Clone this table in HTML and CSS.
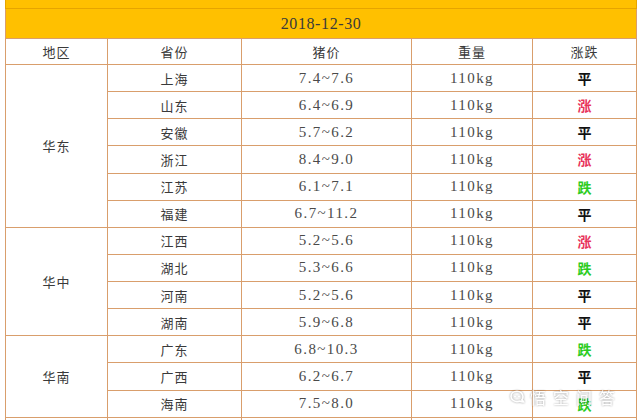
FILE: index.html
```html
<!DOCTYPE html>
<html lang="zh">
<head>
<meta charset="utf-8">
<link rel="stylesheet" href="styles.css">
</head>
<body>
<div class="page">
<table class="price">
<colgroup><col class="c1"><col class="c2"><col class="c3"><col class="c4"><col class="c5"></colgroup>
<tr class="strip"><td colspan="5"></td></tr>
<tr class="title"><td colspan="5">2018-12-30</td></tr>
<tr class="head"><td>地区</td><td>省份</td><td>猪价</td><td>重量</td><td>涨跌</td></tr>
<tr><td class="region" rowspan="6">华东</td><td class="prov">上海</td><td class="num">7.4~7.6</td><td class="num">110kg</td><td class="flat">平</td></tr>
<tr><td class="prov">山东</td><td class="num">6.4~6.9</td><td class="num">110kg</td><td class="up">涨</td></tr>
<tr><td class="prov">安徽</td><td class="num">5.7~6.2</td><td class="num">110kg</td><td class="flat">平</td></tr>
<tr><td class="prov">浙江</td><td class="num">8.4~9.0</td><td class="num">110kg</td><td class="up">涨</td></tr>
<tr><td class="prov">江苏</td><td class="num">6.1~7.1</td><td class="num">110kg</td><td class="down">跌</td></tr>
<tr><td class="prov">福建</td><td class="num">6.7~11.2</td><td class="num">110kg</td><td class="flat">平</td></tr>
<tr><td class="region" rowspan="4">华中</td><td class="prov">江西</td><td class="num">5.2~5.6</td><td class="num">110kg</td><td class="up">涨</td></tr>
<tr><td class="prov">湖北</td><td class="num">5.3~6.6</td><td class="num">110kg</td><td class="down">跌</td></tr>
<tr><td class="prov">河南</td><td class="num">5.2~5.6</td><td class="num">110kg</td><td class="flat">平</td></tr>
<tr><td class="prov">湖南</td><td class="num">5.9~6.8</td><td class="num">110kg</td><td class="flat">平</td></tr>
<tr><td class="region" rowspan="3">华南</td><td class="prov">广东</td><td class="num">6.8~10.3</td><td class="num">110kg</td><td class="down">跌</td></tr>
<tr><td class="prov">广西</td><td class="num">6.2~6.7</td><td class="num">110kg</td><td class="flat">平</td></tr>
<tr><td class="prov">海南</td><td class="num">7.5~8.0</td><td class="num">110kg</td><td class="down">跌</td></tr>
<tr class="tail"><td></td><td></td><td></td><td></td><td></td></tr>
</table>
<div class="watermark">
<svg class="wm-logo" viewBox="0 0 16 16" width="16" height="16" aria-hidden="true">
<path d="M8 2.2c3.4 0 6 2.4 6 5.6 0 1.3-.5 2.4-1.3 3.3.9.4 1.6 1 1.9 1.8-1.5.1-2.8-.2-3.8-.8-.9.4-1.8.5-2.8.5-3.4 0-6-2.4-6-5.4S4.6 2.2 8 2.2z" fill="none" stroke="#fff" stroke-width="1.6"/>
<circle cx="6" cy="7.6" r="1" fill="#fff"/><circle cx="10" cy="7.6" r="1" fill="#fff"/>
</svg>
<span class="wm-text">悟空问答</span>
</div>
</div>
</body>
</html>
```
FILE: styles.css
```css
html, body {
  margin: 0;
  padding: 0;
  background: #ffffff;
  height: 420px;
  overflow: hidden;
}
.page {
  position: relative;
  width: 640px;
  height: 420px;
  overflow: hidden;
  padding-left: 5px;
  box-sizing: border-box;
}
.price {
  border-collapse: collapse;
  table-layout: fixed;
  width: 631px;
  margin-top: -1px;
  font-family: "Noto Sans CJK SC", "Noto Sans", sans-serif;
  font-size: 13px;
  color: #3a3a3a;
}
.c1 { width: 102px; }
.c2 { width: 134px; }
.c3 { width: 170px; }
.c4 { width: 121px; }
.c5 { width: 104px; }
.price td {
  border: 1px solid #d99e6c;
  padding: 0;
  text-align: center;
  vertical-align: middle;
  line-height: 1;
  height: 26.13px;
}
.price tr.strip td {
  background: #ffc000;
  height: 8px;
  border-color: #e6a400;
}
.price tr.title td {
  background: #ffc000;
  height: 29px;
  font-family: "Liberation Serif", serif;
  font-size: 16px;
  letter-spacing: 0.6px;
  color: #3a3a3a;
  border-top-color: #e6a400;
}
.price tr.head td {
  height: 25px;
  letter-spacing: 1px;
}
.prov, .region {
  letter-spacing: 1px;
}
.num {
  font-family: "Liberation Serif", serif;
  font-size: 15px;
  letter-spacing: 1.4px;
  color: #4a4a4a;
}
.flat, .up, .down {
  font-family: "Noto Sans CJK SC", sans-serif;
  font-weight: 700;
  font-size: 14px;
}
.flat { color: #111; }
.up { color: #e8335a; }
.down { color: #2ccc22; }
.watermark {
  position: absolute;
  left: 509px;
  top: 389px;
  display: flex;
  align-items: center;
  gap: 5px;
  opacity: 0.9;
  filter: drop-shadow(0 0 1px rgba(0,0,0,0.45));
}
.wm-text {
  font-family: "Noto Sans CJK SC", sans-serif;
  font-size: 16px;
  color: #ffffff;
  letter-spacing: 7px;
  line-height: 1;
}
```
